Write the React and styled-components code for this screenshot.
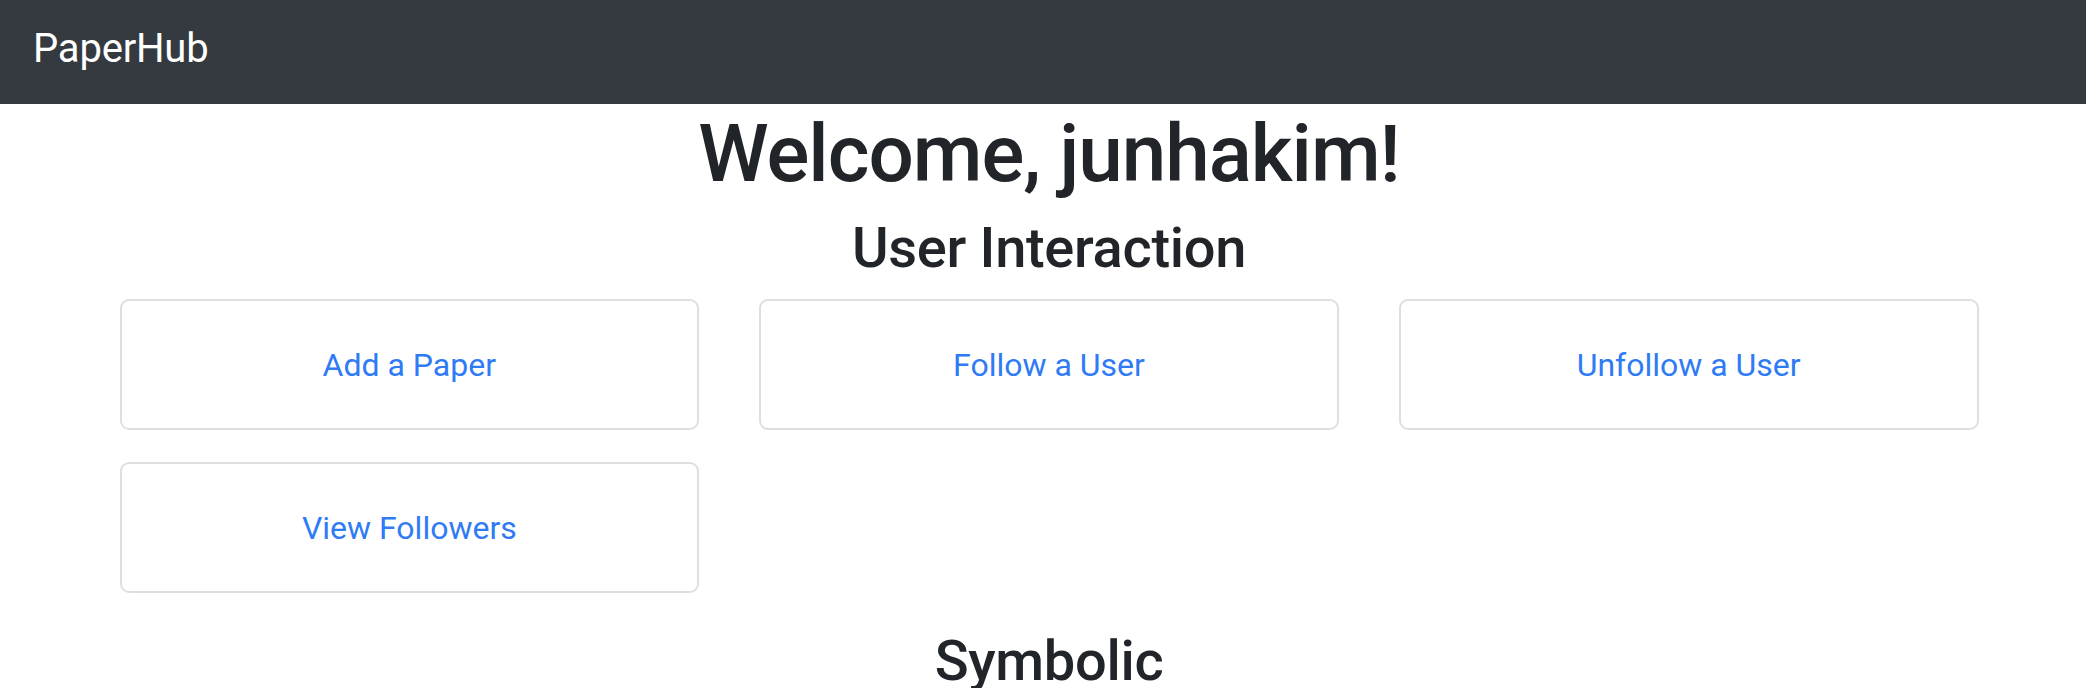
import React from "react";
import styled, { createGlobalStyle } from "styled-components";

const GlobalStyle = createGlobalStyle`
  html, body {
    margin: 0;
    padding: 0;
    background: #ffffff;
    font-family: Roboto, "Liberation Sans", Arial, sans-serif;
    color: #212529;
  }
  * { box-sizing: border-box; }
`;

const Navbar = styled.nav`
  height: 104px;
  background: #343a40;
  display: flex;
  align-items: flex-start;
  padding: 29px 33px 0;
`;

const Brand = styled.a`
  color: #ffffff;
  font-size: 40px;
  line-height: 40px;
  letter-spacing: -0.2px;
  text-decoration: none;
`;

const Main = styled.main`
  padding-left: 12px;
`;

const Container = styled.div`
  max-width: 1859px;
  margin: 0 auto;
`;

const Title = styled.h1`
  margin: 2px 0 13px;
  font-size: 80px;
  line-height: 96px;
  font-weight: 500;
  letter-spacing: -1px;
  text-align: center;
  color: #212529;
`;

const SectionTitle = styled.h3`
  margin: ${(p) => p.$top}px 0 16px;
  font-size: 56px;
  line-height: 67px;
  font-weight: 500;
  letter-spacing: -0.3px;
  text-align: center;
  color: #212529;
`;

const CardGrid = styled.div`
  display: grid;
  grid-template-columns: repeat(3, 1fr);
  column-gap: 60px;
  row-gap: 32px;
  padding-top: 1px;
`;

const Card = styled.a`
  display: flex;
  align-items: center;
  justify-content: center;
  height: 131px;
  padding: 40px;
  border: 2px solid #dfdfdf;
  border-radius: 9px;
  background: #ffffff;
  color: #2f7bf5;
  font-size: 32px;
  line-height: 48px;
  text-decoration: none;
`;

const actions = ["Add a Paper", "Follow a User", "Unfollow a User", "View Followers"];

export default function App() {
  return (
    <>
      <GlobalStyle />
      <Navbar>
        <Brand href="#">PaperHub</Brand>
      </Navbar>
      <Main>
        <Container>
          <Title>Welcome, junhakim!</Title>
          <SectionTitle $top={0}>User Interaction</SectionTitle>
          <CardGrid>
            {actions.map((a) => (
              <Card key={a} href="#">
                {a}
              </Card>
            ))}
          </CardGrid>
          <SectionTitle $top={35}>Symbolic</SectionTitle>
        </Container>
      </Main>
    </>
  );
}
